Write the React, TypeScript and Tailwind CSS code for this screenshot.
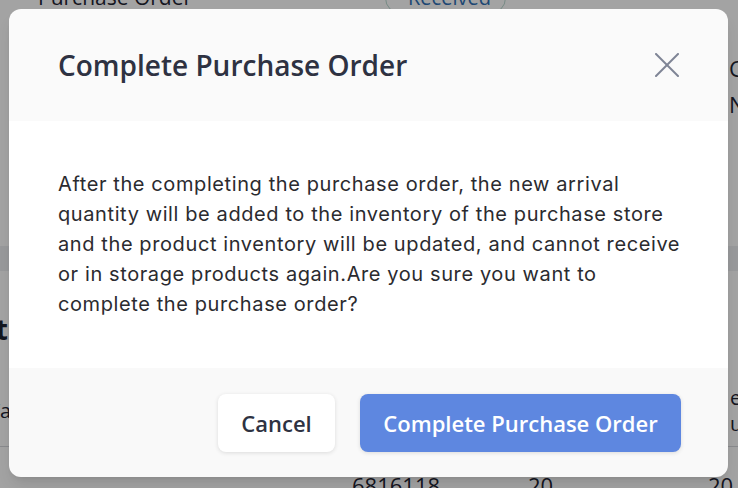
import React from 'react';

const CloseIcon: React.FC = () => (
  <svg width="24" height="24" viewBox="0 0 24 24" fill="none" stroke="currentColor" strokeWidth="2" strokeLinecap="round">
    <path d="M1 1 L23 23" />
    <path d="M23 1 L1 23" />
  </svg>
);

// Page behind the dialog, only edges show
const BackgroundPage: React.FC = () => (
  <div className="w-[738px] h-[488px] bg-white text-[#1f2433] font-['Open_Sans',sans-serif] overflow-hidden">
    <div className="flex items-center h-[24px] -mt-[14px]">
      <div className="pl-[38px] w-[385px] text-[21px]">Purchase Order</div>
      <div className="flex items-center gap-[4px] h-[32px] px-[14px] rounded-full border border-[#b9d9d0] text-[#2f6fb5] text-[20px]">
        <span className="w-[4px] h-[4px] rounded-full bg-[#7aa4d6]" />
        Received
      </div>
    </div>
    <div className="flex flex-col pl-[729px] mt-[46px] gap-[12px] text-[22px] leading-[24px] whitespace-nowrap">
      <div>Created</div>
      <div>No.</div>
    </div>
    <div className="mt-[130px] h-[25px] bg-[#eef0f3]" />
    <div className="mt-[41px] -ml-[200px] w-[208px] text-right font-bold text-[28px] leading-[34px]">Product</div>
    <div className="flex justify-between mt-[40px] h-[50px] items-center text-[20px] leading-[22px]">
      <div className="-ml-[12px]">Va</div>
      <div className="pl-[2px] w-[10px] leading-[26px] whitespace-nowrap">
        <div>ec</div>
        <div>ua</div>
      </div>
    </div>
    <div className="mt-[10px] border-t border-[#d6d8dd]" />
    <div className="flex mt-[22px] text-[22px]">
      <div className="pl-[352px] w-[528px]">6816118</div>
      <div className="w-[180px]">20</div>
      <div>20</div>
    </div>
  </div>
);

export default function App() {
  return (
    <div className="relative w-[738px] h-[488px] overflow-hidden">
      <BackgroundPage />
      <div className="absolute inset-0 bg-black/[0.36]" />
      <div className="absolute left-[9px] top-[9px] w-[719px] h-[468px] rounded-[12px] overflow-hidden flex flex-col shadow-lg">
        <div className="h-[112px] bg-[#fafafa] flex items-center justify-between pl-[49px] pr-[49px]">
          <h2 className="font-['Open_Sans',sans-serif] font-semibold text-[28px] text-[#2e3242]">
            Complete Purchase Order
          </h2>
          <button className="text-[#7e8495]">
            <CloseIcon />
          </button>
        </div>
        <div className="h-[247px] bg-white pl-[49px] pr-[20px] pt-[48px]">
          <p className="font-['Inter',sans-serif] text-[20px] leading-[30px] text-[#2b2b2f] tracking-[0.6px] whitespace-nowrap">
            After the completing the purchase order, the new arrival
            <br />
            quantity will be added to the inventory of the purchase store
            <br />
            and the product inventory will be updated, and cannot receive
            <br />
            or in storage products again.Are you sure you want to
            <br />
            complete the purchase order?
          </p>
        </div>
        <div className="flex-1 bg-[#f9f9f9] flex justify-end items-start pt-[26px] pr-[47px] gap-[25px] font-['Open_Sans',sans-serif]">
          <button className="w-[117px] h-[58px] rounded-[8px] bg-white shadow-[0_1px_4px_rgba(0,0,0,0.12)] text-[22px] font-semibold text-[#2e3242]">
            Cancel
          </button>
          <button className="w-[321px] h-[58px] rounded-[8px] bg-[#5e87e0] shadow-[0_1px_4px_rgba(0,0,0,0.12)] text-[22px] font-semibold text-white">
            Complete Purchase Order
          </button>
        </div>
      </div>
    </div>
  );
}
